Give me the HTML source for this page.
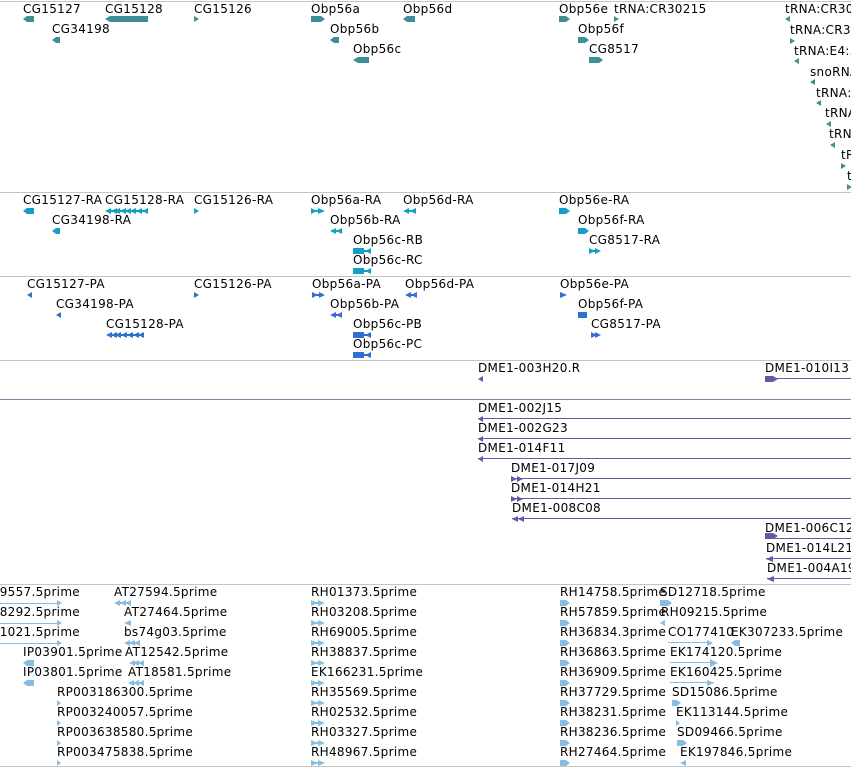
<!DOCTYPE html>
<html><head><meta charset="utf-8"><style>
html,body{margin:0;padding:0;background:#fff;width:851px;height:768px;overflow:hidden}
svg{display:block}
text{font-family:"DejaVu Sans","Liberation Sans",sans-serif;font-size:12px;fill:#000;letter-spacing:0.3px}
</style></head><body>
<svg width="851" height="768" viewBox="0 0 851 768" xmlns="http://www.w3.org/2000/svg">
<g stroke="#c4c4c4" stroke-width="1">
<line x1="0" y1="1.5" x2="851" y2="1.5"/>
<line x1="0" y1="192.5" x2="851" y2="192.5"/>
<line x1="0" y1="276.5" x2="851" y2="276.5"/>
<line x1="0" y1="360.5" x2="851" y2="360.5"/>
<line x1="0" y1="584.5" x2="851" y2="584.5"/>
<line x1="0" y1="766.5" x2="851" y2="766.5"/>
</g>
<line x1="0" y1="399.5" x2="851" y2="399.5" stroke="#8a84a8"/>

<g>
<text x="23" y="13">CG15127</text>
<text x="105" y="13">CG15128</text>
<text x="194" y="13">CG15126</text>
<text x="311" y="13">Obp56a</text>
<text x="403" y="13">Obp56d</text>
<text x="559" y="13">Obp56e</text>
<text x="614" y="13">tRNA:CR30215</text>
<text x="785" y="13">tRNA:CR30</text>
<text x="52" y="33">CG34198</text>
<text x="330" y="33">Obp56b</text>
<text x="578" y="33">Obp56f</text>
<text x="790" y="34">tRNA:CR30</text>
<text x="353" y="53">Obp56c</text>
<text x="589" y="53">CG8517</text>
<text x="794" y="55">tRNA:E4:5</text>
<text x="810" y="76">snoRNA</text>
<text x="816" y="97">tRNA:I</text>
<text x="825" y="117">tRNA</text>
<text x="829" y="138">tRNA</text>
<text x="841" y="159">tR</text>
<text x="847" y="180">t</text>
</g>
<g fill="#3f8f96">
<polygon points="34,16 27,16 23,19 27,22 34,22"/>
<polygon points="148,16 110,16 105,19 110,22 148,22"/>
<polygon points="194,16 199,19 194,22"/>
<polygon points="311,16 321,16 325,19 321,22 311,22"/>
<polygon points="415,16 407,16 403,19 407,22 415,22"/>
<polygon points="559,16 566,16 570,19 566,22 559,22"/>
<polygon points="614,16 619,19 614,22"/>
<polygon points="790,16 785,19 790,22"/>
<polygon points="60,37 56,37 52,40 56,43 60,43"/>
<polygon points="339,37 334,37 330,40 334,43 339,43"/>
<polygon points="578,37 585,37 589,40 585,43 578,43"/>
<polygon points="790,38 795,41 790,44"/>
<polygon points="369,57 358,57 353,60 358,63 369,63"/>
<polygon points="589,57 599,57 603,60 599,63 589,63"/>
<polygon points="799,58 794,61 799,64"/>
<polygon points="815,79 810,82 815,85"/>
<polygon points="821,100 816,103 821,106"/>
<polygon points="831,121 826,124 831,127"/>
<polygon points="835,142 830,145 835,148"/>
<polygon points="841,163 846,166 841,169"/>
<polygon points="847,184 852,187 847,190"/>
</g>

<g>
<text x="23" y="204">CG15127-RA</text>
<text x="105" y="204">CG15128-RA</text>
<text x="194" y="204">CG15126-RA</text>
<text x="311" y="204">Obp56a-RA</text>
<text x="403" y="204">Obp56d-RA</text>
<text x="559" y="204">Obp56e-RA</text>
<text x="52" y="224">CG34198-RA</text>
<text x="330" y="224">Obp56b-RA</text>
<text x="578" y="224">Obp56f-RA</text>
<text x="353" y="244">Obp56c-RB</text>
<text x="589" y="244">CG8517-RA</text>
<text x="353" y="264">Obp56c-RC</text>
</g>
<g fill="#14a0c4">
<polygon points="34,208 27,208 23,211 27,214 34,214"/>
<rect x="108" y="210" width="40" height="2"/>
<polygon points="111,208 105,211 111,214"/><polygon points="117,208 111,211 117,214"/><polygon points="120,208 114,211 120,214"/>
<polygon points="126,208 120,211 126,214"/><polygon points="131,208 125,211 131,214"/><polygon points="136,208 130,211 136,214"/>
<polygon points="142,208 136,211 142,214"/><polygon points="148,208 142,211 148,214"/>
<polygon points="194,208 199,211 194,214"/>
<polygon points="311,208 317,211 311,214"/><polygon points="318,208 325,211 318,214"/><rect x="311" y="210" width="10" height="2"/>
<polygon points="409,208 403,211 409,214"/><polygon points="416,208 410,211 416,214"/><rect x="406" y="210" width="10" height="2"/>
<polygon points="559,208 566,208 570,211 566,214 559,214"/>
<polygon points="60,228 56,228 52,231 56,234 60,234"/>
<polygon points="336,228 330,231 336,234"/><polygon points="342,228 336,231 342,234"/><rect x="333" y="230" width="9" height="2"/>
<polygon points="578,228 585,228 589,231 585,234 578,234"/>
<rect x="353" y="248" width="11" height="6"/><rect x="353" y="250" width="18" height="2"/><polygon points="371,248 365,251 371,254"/>
<polygon points="589,248 595,251 589,254"/><polygon points="595,248 601,251 595,254"/><rect x="589" y="250" width="10" height="2"/>
<rect x="353" y="268" width="11" height="6"/><rect x="353" y="270" width="18" height="2"/><polygon points="371,268 365,271 371,274"/>
</g>

<g>
<text x="27" y="288">CG15127-PA</text>
<text x="194" y="288">CG15126-PA</text>
<text x="312" y="288">Obp56a-PA</text>
<text x="405" y="288">Obp56d-PA</text>
<text x="560" y="288">Obp56e-PA</text>
<text x="56" y="308">CG34198-PA</text>
<text x="330" y="308">Obp56b-PA</text>
<text x="578" y="308">Obp56f-PA</text>
<text x="106" y="328">CG15128-PA</text>
<text x="353" y="328">Obp56c-PB</text>
<text x="591" y="328">CG8517-PA</text>
<text x="353" y="348">Obp56c-PC</text>
</g>
<g fill="#3070d0">
<polygon points="32,292 27,295 32,298"/>
<polygon points="194,292 199,295 194,298"/>
<polygon points="312,292 318,295 312,298"/><polygon points="319,292 325,295 319,298"/><rect x="312" y="294" width="10" height="2"/>
<polygon points="411,292 405,295 411,298"/><polygon points="417,292 411,295 417,298"/><rect x="408" y="294" width="9" height="2"/>
<polygon points="560,292 567,295 560,298"/>
<polygon points="61,312 56,315 61,318"/>
<polygon points="336,312 330,315 336,318"/><polygon points="342,312 336,315 342,318"/><rect x="333" y="314" width="9" height="2"/>
<polygon points="578,312 587,312 587,318 578,318"/>
<rect x="108" y="334" width="36" height="2"/>
<polygon points="112,332 106,335 112,338"/><polygon points="117,332 111,335 117,338"/><polygon points="121,332 115,335 121,338"/>
<polygon points="127,332 121,335 127,338"/><polygon points="133,332 127,335 133,338"/><polygon points="139,332 133,335 139,338"/><polygon points="144,332 138,335 144,338"/>
<rect x="353" y="332" width="11" height="6"/><rect x="353" y="334" width="18" height="2"/><polygon points="371,332 365,335 371,338"/>
<polygon points="591,332 597,335 591,338"/><polygon points="595,332 601,335 595,338"/>
<rect x="353" y="352" width="11" height="6"/><rect x="353" y="354" width="18" height="2"/><polygon points="371,352 365,355 371,358"/>
</g>

<g>
<text x="478" y="372">DME1-003H20.R</text>
<text x="765" y="372">DME1-010I13</text>
<text x="478" y="412">DME1-002J15</text>
<text x="478" y="432">DME1-002G23</text>
<text x="478" y="452">DME1-014F11</text>
<text x="511" y="472">DME1-017J09</text>
<text x="511" y="492">DME1-014H21</text>
<text x="512" y="512">DME1-008C08</text>
<text x="765" y="532">DME1-006C12</text>
<text x="766" y="552">DME1-014L21</text>
<text x="767" y="572">DME1-004A19</text>
</g>
<g fill="#6b55a8">
<polygon points="483,376 478,379 483,382"/>
<polygon points="765,376 773,376 778,379 773,382 765,382"/><rect x="765" y="378" width="86" height="1"/>
<polygon points="483,416 478,419 483,422"/><rect x="478" y="418" width="373" height="1"/>
<polygon points="483,436 478,439 483,442"/><rect x="478" y="438" width="373" height="1"/>
<polygon points="483,456 478,459 483,462"/><rect x="478" y="458" width="373" height="1"/>
<polygon points="511,476 517,479 511,482"/><polygon points="517,476 523,479 517,482"/><rect x="511" y="478" width="340" height="1"/>
<polygon points="511,496 517,499 511,502"/><polygon points="517,496 523,499 517,502"/><rect x="511" y="498" width="340" height="1"/>
<polygon points="518,516 512,519 518,522"/><polygon points="524,516 518,519 524,522"/><rect x="512" y="518" width="339" height="1"/>
<polygon points="765,533 773,533 778,536 773,539 765,539"/><rect x="765" y="538" width="86" height="1"/>
<polygon points="773,556 766,559 773,562"/><rect x="766" y="558" width="85" height="1"/>
<polygon points="774,576 767,579 774,582"/><rect x="767" y="578" width="84" height="1"/>
</g>

<g>
<text x="80" y="596" text-anchor="end">29557.5prime</text>
<text x="80" y="616" text-anchor="end">58292.5prime</text>
<text x="80" y="636" text-anchor="end">01021.5prime</text>
<text x="23" y="656">IP03901.5prime</text>
<text x="23" y="676">IP03801.5prime</text>
<text x="57" y="696">RP003186300.5prime</text>
<text x="57" y="716">RP003240057.5prime</text>
<text x="57" y="736">RP003638580.5prime</text>
<text x="57" y="756">RP003475838.5prime</text>
<text x="114" y="596">AT27594.5prime</text>
<text x="124" y="616">AT27464.5prime</text>
<text x="124" y="636">bs74g03.5prime</text>
<text x="125" y="656">AT12542.5prime</text>
<text x="128" y="676">AT18581.5prime</text>
<text x="311" y="596">RH01373.5prime</text>
<text x="311" y="616">RH03208.5prime</text>
<text x="311" y="636">RH69005.5prime</text>
<text x="311" y="656">RH38837.5prime</text>
<text x="311" y="676">EK166231.5prime</text>
<text x="311" y="696">RH35569.5prime</text>
<text x="311" y="716">RH02532.5prime</text>
<text x="311" y="736">RH03327.5prime</text>
<text x="311" y="756">RH48967.5prime</text>
<text x="560" y="596">RH14758.5prime</text>
<text x="560" y="616">RH57859.5prime</text>
<text x="560" y="636">RH36834.3prime</text>
<text x="560" y="656">RH36863.5prime</text>
<text x="560" y="676">RH36909.5prime</text>
<text x="560" y="696">RH37729.5prime</text>
<text x="560" y="716">RH38231.5prime</text>
<text x="560" y="736">RH38236.5prime</text>
<text x="560" y="756">RH27464.5prime</text>
<text x="660" y="596">SD12718.5prime</text>
<text x="661" y="616">RH09215.5prime</text>
<text x="668" y="636">CO177410</text>
<text x="731" y="636">EK307233.5prime</text>
<text x="670" y="656">EK174120.5prime</text>
<text x="670" y="676">EK160425.5prime</text>
<text x="672" y="696">SD15086.5prime</text>
<text x="676" y="716">EK113144.5prime</text>
<text x="677" y="736">SD09466.5prime</text>
<text x="680" y="756">EK197846.5prime</text>
</g>
<g fill="#88bde0">
<rect x="0" y="603" width="58" height="1"/><polygon points="57,600 62,603 57,606"/>
<rect x="0" y="623" width="58" height="1"/><polygon points="57,620 62,623 57,626"/>
<rect x="0" y="643" width="58" height="1"/><polygon points="57,640 62,643 57,646"/>
<polygon points="34,660 27,660 23,663 27,666 34,666"/>
<polygon points="34,680 27,680 23,683 27,686 34,686"/>
<polygon points="57,700 61,703 57,706"/>
<polygon points="57,720 61,723 57,726"/>
<polygon points="57,740 61,743 57,746"/>
<polygon points="57,760 61,763 57,766"/>
<rect x="116" y="602" width="15" height="2"/><polygon points="120,600 114,603 120,606"/><polygon points="126,600 120,603 126,606"/><polygon points="131,600 125,603 131,606"/>
<polygon points="131,620 124,623 131,626"/>
<rect x="126" y="642" width="13" height="2"/><polygon points="130,640 124,643 130,646"/><polygon points="135,640 129,643 135,646"/><polygon points="140,640 134,643 140,646"/>
<rect x="131" y="662" width="12" height="2"/><polygon points="135,660 129,663 135,666"/><polygon points="139,660 133,663 139,666"/><polygon points="144,660 138,663 144,666"/>
<rect x="130" y="682" width="13" height="2"/><polygon points="134,680 128,683 134,686"/><polygon points="139,680 133,683 139,686"/><polygon points="144,680 138,683 144,686"/>
<g id="dr">
<polygon points="311,600 318,603 311,606"/><polygon points="318,600 325,603 318,606"/><rect x="311" y="602" width="10" height="2"/>
</g>
<use href="#dr" y="20"/><use href="#dr" y="40"/><use href="#dr" y="60"/><use href="#dr" y="80"/><use href="#dr" y="100"/><use href="#dr" y="120"/><use href="#dr" y="140"/><use href="#dr" y="160"/>
<g id="rr">
<polygon points="560,600 566,600 570,603 566,606 560,606"/>
</g>
<use href="#rr" y="20"/><use href="#rr" y="40"/><use href="#rr" y="60"/><use href="#rr" y="80"/><use href="#rr" y="100"/><use href="#rr" y="120"/><use href="#rr" y="140"/><use href="#rr" y="160"/>
<polygon points="660,600 668,600 672,603 668,606 660,606"/>
<polygon points="665,620 660,623 665,626"/>
<rect x="668" y="642" width="44" height="1"/><polygon points="707,640 713,643 707,646"/>
<polygon points="740,640 735,640 731,643 735,646 740,646"/>
<rect x="670" y="662" width="47" height="1"/><polygon points="710,659 718,663 710,667"/>
<rect x="670" y="682" width="44" height="1"/><polygon points="707,680 714,683 707,686"/>
<polygon points="672,700 677,700 681,703 677,706 672,706"/>
<polygon points="676,720 680,723 676,726"/>
<polygon points="677,740 683,740 687,743 683,746 677,746"/>
<polygon points="686,760 680,763 686,766"/>
</g>
</svg>
</body></html>
